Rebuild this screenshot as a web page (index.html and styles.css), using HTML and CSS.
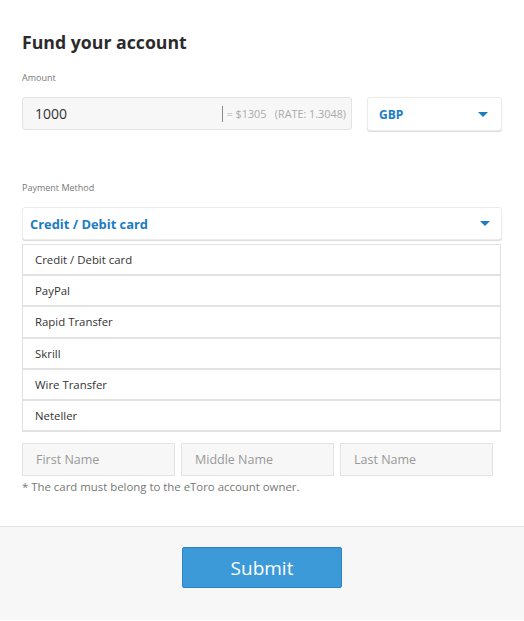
FILE: index.html
```html
<!DOCTYPE html>
<html lang="en">
<head>
    <meta charset="UTF-8">
    <meta name="viewport" content="width=device-width, initial-scale=1.0">
    <title>Fund your account</title>
    <link rel="stylesheet" href="styles.css">
</head>
<body>
    <div class="content">
        <h1 class="title">Fund your account</h1>

        <div class="label">Amount</div>
        <div class="amount-row">
            <div class="amount-input">
                <span class="amount-value">1000</span>
                <span class="amount-divider"></span>
                <span class="amount-rate">= $1305 &nbsp;&nbsp;(RATE: 1.3048)</span>
            </div>
            <div class="select currency">
                <span>GBP</span>
                <span class="caret"></span>
            </div>
        </div>

        <div class="label method-label">Payment Method</div>
        <div class="select method">
            <span>Credit / Debit card</span>
            <span class="caret"></span>
        </div>
        <ul class="options">
            <li>Credit / Debit card</li>
            <li>PayPal</li>
            <li>Rapid Transfer</li>
            <li>Skrill</li>
            <li>Wire Transfer</li>
            <li>Neteller</li>
        </ul>

        <div class="names">
            <div class="name-input">First Name</div>
            <div class="name-input">Middle Name</div>
            <div class="name-input">Last Name</div>
        </div>
        <p class="note">* The card must belong to the eToro account owner.</p>
    </div>

    <div class="footer">
        <button class="submit-btn">Submit</button>
    </div>
</body>
</html>
```

FILE: styles.css
```css
body {
    font-family: "Open Sans", Arial, sans-serif;
    margin: 0;
    background-color: #ffffff;
    color: #333;
}

.content {
    padding: 30px 22px 32px;
}

.title {
    margin: 0;
    font-size: 17.7px;
    line-height: 24px;
    font-weight: 700;
    color: #2b2b2b;
}

.label {
    margin-top: 18px;
    font-size: 9px;
    line-height: 12px;
    color: #777;
}

.method-label {
    margin-top: 51px;
}

.amount-row {
    display: flex;
    gap: 15px;
    margin-top: 13px;
}

.amount-input {
    box-sizing: border-box;
    width: 330px;
    height: 33px;
    display: flex;
    align-items: center;
    padding: 0 5px 0 12px;
    background-color: #f7f7f7;
    border: 1px solid #e3e3e3;
    border-radius: 3px;
}

.amount-value {
    flex: 1;
    font-size: 14px;
    color: #333;
}

.amount-divider {
    width: 1px;
    height: 16px;
    background-color: #888;
    margin-right: 4px;
}

.amount-rate {
    font-size: 10.8px;
    color: #aaa;
}

.select {
    box-sizing: border-box;
    height: 34px;
    display: flex;
    align-items: center;
    justify-content: space-between;
    background-color: #fff;
    border: 1px solid #ececec;
    border-radius: 3px;
    box-shadow: 0 1px 1px rgba(0, 0, 0, 0.15);
    color: #1a7cc1;
    font-weight: 700;
}

.currency {
    width: 135px;
    padding: 0 13px 0 11px;
    font-size: 12px;
}

.method {
    margin-top: 13px;
    padding: 0 11px 0 7px;
    height: 33px;
    font-size: 12.9px;
}

.caret {
    width: 0;
    height: 0;
    border-left: 5px solid transparent;
    border-right: 5px solid transparent;
    border-top: 5px solid #1a7cc1;
}

.options {
    list-style: none;
    margin: 4px 1px 0 0;
    padding: 0;
    border: 1px solid #e0e0e0;
    border-bottom: none;
}

.options li {
    height: 29.2px;
    line-height: 29px;
    padding-left: 12px;
    font-size: 11.4px;
    color: #333;
    border-bottom: 2px solid #e2e2e2;
}

.names {
    display: flex;
    gap: 6px;
    margin-top: 11px;
}

.name-input {
    box-sizing: border-box;
    width: 153px;
    height: 33px;
    line-height: 31px;
    padding-left: 13px;
    background-color: #f7f7f7;
    border: 1px solid #e3e3e3;
    font-size: 12.5px;
    color: #999;
}

.note {
    margin: 3px 0 0;
    font-size: 11.4px;
    line-height: 15px;
    color: #777;
}

.footer {
    border-top: 1px solid #e2e2e2;
    background-color: #f7f7f7;
    height: 94px;
    display: flex;
    justify-content: center;
    align-items: flex-start;
    padding-top: 20px;
    box-sizing: border-box;
}

.submit-btn {
    width: 160px;
    height: 41px;
    background-color: #3d9ad9;
    border: 1px solid #2c82c2;
    border-radius: 2px;
    color: #fff;
    font-family: "Open Sans", Arial, sans-serif;
    font-size: 19px;
    cursor: pointer;
}
```
